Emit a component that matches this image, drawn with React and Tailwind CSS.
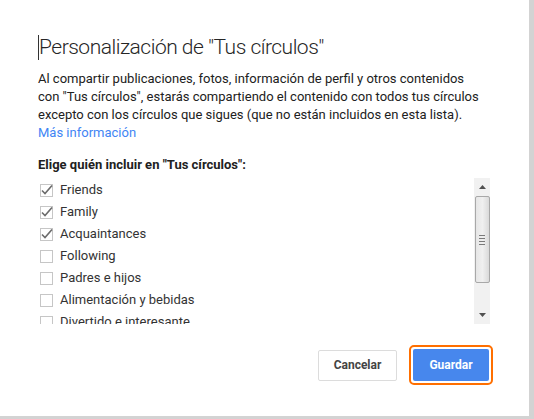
import React from 'react';

const CIRCLES = [
  { name: 'Friends', checked: true },
  { name: 'Family', checked: true },
  { name: 'Acquaintances', checked: true },
  { name: 'Following', checked: false },
  { name: 'Padres e hijos', checked: false },
  { name: 'Alimentación y bebidas', checked: false },
  { name: 'Divertido e interesante', checked: false },
];

function Checkbox({ checked }) {
  return (
    <span className="w-[13px] h-[13px] border border-[#c6c6c6] bg-white flex items-center justify-center shrink-0">
      {checked && (
        <svg width="13" height="13" viewBox="0 0 13 13" className="overflow-visible">
          <path d="M2 6.5 L5 9.5 L12 1.5" fill="none" stroke="#6b6b6b" strokeWidth="1.6" />
        </svg>
      )}
    </span>
  );
}

function Scrollbar() {
  return (
    <div className="w-[16px] h-full bg-[#f1f1f1] flex flex-col items-center">
      <div className="h-[18px] w-full flex items-center justify-center">
        <svg width="7" height="4" viewBox="0 0 7 4"><path d="M0 4 L3.5 0 L7 4 Z" fill="#505050" /></svg>
      </div>
      <div className="w-[15px] h-[87px] rounded-[2px] border border-[#a8a8a8] bg-gradient-to-r from-[#e6e6e6] via-[#f0f0f0] to-[#dadada] flex flex-col items-center justify-center gap-[2px]">
        <span className="w-[6px] h-px bg-[#7a7a7a]" />
        <span className="w-[6px] h-px bg-[#7a7a7a]" />
        <span className="w-[6px] h-px bg-[#7a7a7a]" />
        <span className="w-[6px] h-px bg-[#7a7a7a]" />
      </div>
      <div className="flex-1" />
      <div className="h-[18px] w-full flex items-center justify-center">
        <svg width="7" height="4" viewBox="0 0 7 4"><path d="M0 0 L3.5 4 L7 0 Z" fill="#505050" /></svg>
      </div>
    </div>
  );
}

export default function App() {
  return (
    <div className="w-[534px] h-[419px] bg-[#d3d3d3] overflow-hidden font-['Roboto',sans-serif]">
      <div className="w-[529px] h-[416px] bg-white pl-[38px] pr-[36px] pt-[35px] flex flex-col">
        <div className="flex items-center h-[25px]">
          <span className="w-px h-[25px] bg-[#333]" />
          <h1 className="text-[21px] tracking-[-0.5px] font-light text-[#262626] leading-[25px]">
            Personalización de "Tus círculos"
          </h1>
        </div>

        <p className="mt-[10px] w-[444px] text-[13px] leading-[18px] text-[#212121]">
          Al compartir publicaciones, fotos, información de perfil y otros contenidos con "Tus círculos", estarás compartiendo el contenido con todos tus círculos excepto con los círculos que sigues (que no están incluidos en esta lista).
          <br />
          <a className="text-[#4285f4]">Más información</a>
        </p>

        <h2 className="mt-[14px] text-[13px] leading-[18px] font-bold text-[#212121]">
          Elige quién incluir en "Tus círculos":
        </h2>

        <div className="mt-[4px] h-[146px] flex w-[452px]">
          <ul className="flex-1 overflow-hidden">
            {CIRCLES.map(c => (
              <li key={c.name} className="h-[22px] flex items-center gap-[7px] pl-[2px] pt-[2px]">
                <Checkbox checked={c.checked} />
                <span className="text-[13px] text-[#333]">{c.name}</span>
              </li>
            ))}
          </ul>
          <Scrollbar />
        </div>

        <div className="mt-[21px] flex justify-end items-center gap-[12px]">
          <button className="w-[79px] h-[31px] rounded-[2px] border border-[#dcdcdc] bg-white text-[12px] font-bold text-[#444]">
            Cancelar
          </button>
          <div className="p-[2px] rounded-[5px] border-2 border-[#ff6f00]">
            <button className="w-[76px] h-[32px] rounded-[2px] bg-[#4787ed] text-[12px] font-bold text-white">
              Guardar
            </button>
          </div>
        </div>
      </div>
    </div>
  );
}
